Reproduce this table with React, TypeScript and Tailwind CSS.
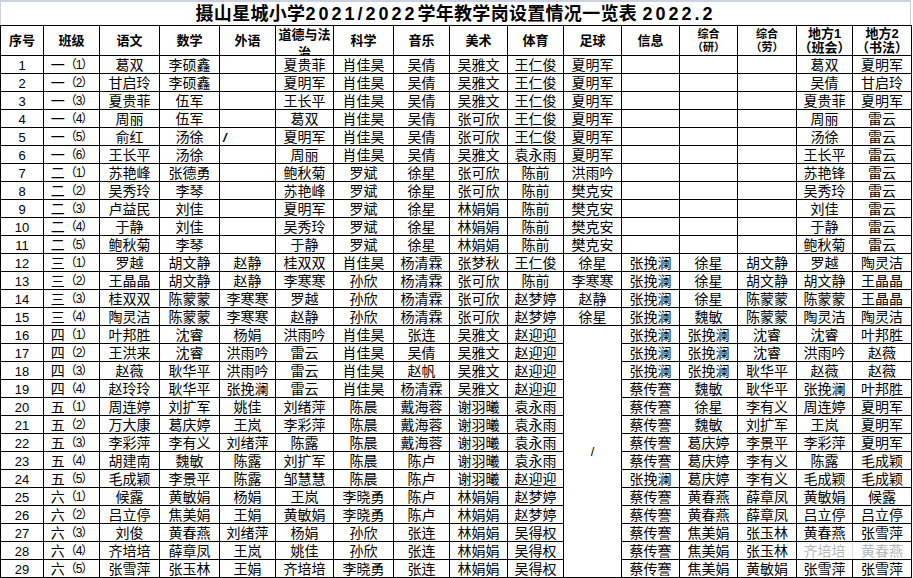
import React from 'react'

const widths = [43, 56, 60, 60, 56, 58, 60, 56, 58, 56, 58, 58, 58, 59, 56, 59]

const rows: string[][] = [
  ['1', '一（1）', '葛双', '李硕鑫', '', '夏贵菲', '肖佳昊', '吴倩', '吴雅文', '王仁俊', '夏明军', '', '', '', '葛双', '夏明军'],
  ['2', '一（2）', '甘启玲', '李硕鑫', '', '夏明军', '肖佳昊', '吴倩', '吴雅文', '王仁俊', '夏明军', '', '', '', '吴倩', '甘启玲'],
  ['3', '一（3）', '夏贵菲', '伍军', '', '王长平', '肖佳昊', '吴倩', '吴雅文', '王仁俊', '夏明军', '', '', '', '夏贵菲', '夏明军'],
  ['4', '一（4）', '周丽', '伍军', '', '葛双', '肖佳昊', '吴倩', '张可欣', '王仁俊', '夏明军', '', '', '', '周丽', '雷云'],
  ['5', '一（5）', '俞红', '汤徐', '/', '夏明军', '肖佳昊', '吴倩', '张可欣', '王仁俊', '夏明军', '', '', '', '汤徐', '雷云'],
  ['6', '一（6）', '王长平', '汤徐', '', '周丽', '肖佳昊', '吴倩', '吴雅文', '袁永雨', '夏明军', '', '', '', '王长平', '雷云'],
  ['7', '二（1）', '苏艳峰', '张德勇', '', '鲍秋菊', '罗斌', '徐星', '张可欣', '陈前', '洪雨吟', '', '', '', '苏艳锋', '雷云'],
  ['8', '二（2）', '吴秀玲', '李琴', '', '苏艳峰', '罗斌', '徐星', '张可欣', '陈前', '樊克安', '', '', '', '吴秀玲', '雷云'],
  ['9', '二（3）', '卢益民', '刘佳', '', '夏明军', '罗斌', '徐星', '林娟娟', '陈前', '樊克安', '', '', '', '刘佳', '雷云'],
  ['10', '二（4）', '于静', '刘佳', '', '吴秀玲', '罗斌', '徐星', '林娟娟', '陈前', '樊克安', '', '', '', '于静', '雷云'],
  ['11', '二（5）', '鲍秋菊', '李琴', '', '于静', '罗斌', '徐星', '林娟娟', '陈前', '樊克安', '', '', '', '鲍秋菊', '雷云'],
  ['12', '三（1）', '罗越', '胡文静', '赵静', '桂双双', '肖佳昊', '杨清霖', '张梦秋', '王仁俊', '徐星', '张挽澜', '徐星', '胡文静', '罗越', '陶灵洁'],
  ['13', '三（2）', '王晶晶', '胡文静', '赵静', '李寒寒', '孙欣', '杨清霖', '张可欣', '陈前', '李寒寒', '张挽澜', '徐星', '胡文静', '胡文静', '王晶晶'],
  ['14', '三（3）', '桂双双', '陈蒙蒙', '李寒寒', '罗越', '孙欣', '杨清霖', '张可欣', '赵梦婷', '赵静', '张挽澜', '徐星', '陈蒙蒙', '陈蒙蒙', '王晶晶'],
  ['15', '三（4）', '陶灵洁', '陈蒙蒙', '李寒寒', '赵静', '孙欣', '杨清霖', '张可欣', '赵梦婷', '徐星', '张挽澜', '魏敏', '陈蒙蒙', '陶灵洁', '陶灵洁'],
  ['16', '四（1）', '叶邦胜', '沈睿', '杨娟', '洪雨吟', '肖佳昊', '张连', '吴雅文', '赵迎迎', '/', '张挽澜', '张挽澜', '沈睿', '沈睿', '叶邦胜'],
  ['17', '四（2）', '王洪来', '沈睿', '洪雨吟', '雷云', '肖佳昊', '吴倩', '吴雅文', '赵迎迎', '', '张挽澜', '张挽澜', '沈睿', '洪雨吟', '赵薇'],
  ['18', '四（3）', '赵薇', '耿华平', '洪雨吟', '雷云', '肖佳昊', '赵帆', '吴雅文', '赵迎迎', '', '张挽澜', '张挽澜', '耿华平', '赵薇', '赵薇'],
  ['19', '四（4）', '赵玲玲', '耿华平', '张挽澜', '雷云', '肖佳昊', '杨清霖', '吴雅文', '赵迎迎', '', '蔡传謇', '魏敏', '耿华平', '张挽澜', '叶邦胜'],
  ['20', '五（1）', '周连婷', '刘扩军', '姚佳', '刘绪萍', '陈晨', '戴海蓉', '谢羽曦', '袁永雨', '', '蔡传謇', '徐星', '李有义', '周连婷', '夏明军'],
  ['21', '五（2）', '万大康', '葛庆婷', '王岚', '李彩萍', '陈晨', '戴海蓉', '谢羽曦', '袁永雨', '', '蔡传謇', '魏敏', '刘扩军', '王岚', '夏明军'],
  ['22', '五（3）', '李彩萍', '李有义', '刘绪萍', '陈露', '陈晨', '戴海蓉', '谢羽曦', '袁永雨', '', '蔡传謇', '葛庆婷', '李景平', '李彩萍', '夏明军'],
  ['23', '五（4）', '胡建南', '魏敏', '陈露', '刘扩军', '陈晨', '陈卢', '谢羽曦', '袁永雨', '', '蔡传謇', '葛庆婷', '李有义', '陈露', '毛成颖'],
  ['24', '五（5）', '毛成颖', '李景平', '陈露', '邹慧慧', '陈晨', '陈卢', '谢羽曦', '赵迎迎', '', '张挽澜', '葛庆婷', '李有义', '毛成颖', '毛成颖'],
  ['25', '六（1）', '候露', '黄敏娟', '杨娟', '王岚', '李晓勇', '陈卢', '林娟娟', '赵梦婷', '', '蔡传謇', '黄春燕', '薛章凤', '黄敏娟', '候露'],
  ['26', '六（2）', '吕立停', '焦美娟', '王娟', '黄敏娟', '李晓勇', '陈卢', '林娟娟', '赵梦婷', '', '蔡传謇', '黄春燕', '薛章凤', '吕立停', '吕立停'],
  ['27', '六（3）', '刘俊', '黄春燕', '刘绪萍', '杨娟', '孙欣', '张连', '林娟娟', '吴得权', '', '蔡传謇', '焦美娟', '张玉林', '黄春燕', '张雪萍'],
  ['28', '六（4）', '齐培培', '薛章凤', '王岚', '姚佳', '孙欣', '张连', '林娟娟', '吴得权', '', '蔡传謇', '焦美娟', '张玉林', '齐培培', '黄春燕'],
  ['29', '六（5）', '张雪萍', '张玉林', '王娟', '齐培培', '李晓勇', '张连', '林娟娟', '吴得权', '', '蔡传謇', '焦美娟', '黄敏娟', '张雪萍', '张雪萍'],
]

const simple = ['序号', '班级', '语文', '数学', '外语']
const simple2 = ['科学', '音乐', '美术', '体育', '足球', '信息']

function HeadCell({ children, small }: { children: React.ReactNode; small?: boolean }) {
  return (
    <th className="border border-black p-0 align-middle text-center font-bold">
      <div
        className={
          small
            ? 'h-[29px] flex flex-col items-center justify-center text-[11px] leading-[13px]'
            : 'h-[29px] flex flex-col items-center justify-center pt-[1px] text-[13px] leading-[14px]'
        }
      >
        {children}
      </div>
    </th>
  )
}

export default function App() {
  return (
    <div className="w-[913px] h-[578px] overflow-hidden bg-white font-['Liberation_Sans','Noto_Sans_CJK_SC',sans-serif] text-black">
      {/* Title */}
      <div className="h-[25px] border-t-2 border-x border-[#c9d1e3] flex items-end justify-center w-[911px]">
        <span className="text-[18px] font-bold leading-[22px] tracking-[0.3px]">
          摄山星城小学<span className="tracking-[3px]">2021/2022</span>学年教学岗设置情况一览表 <span className="tracking-[3px]">2022.2</span>
        </span>
      </div>

      {/* Table */}
      <table className="table-fixed border-collapse w-[911px]">
        <colgroup>
          {widths.map((w, i) => (
            <col key={i} style={{ width: w }} />
          ))}
        </colgroup>
        <thead>
          <tr>
            {simple.map(t => (
              <HeadCell key={t}>{t}</HeadCell>
            ))}
            <th className="border border-black p-0 align-top text-center text-[13px] font-bold">
              <div className="h-[29px] overflow-hidden leading-[18px]">道德与法治</div>
            </th>
            {simple2.map(t => (
              <HeadCell key={t}>{t}</HeadCell>
            ))}
            <HeadCell small>
              <span>综合</span>
              <span>（研）</span>
            </HeadCell>
            <HeadCell small>
              <span>综合</span>
              <span>（劳）</span>
            </HeadCell>
            <HeadCell>
              <span>地方1</span>
              <span>（班会）</span>
            </HeadCell>
            <HeadCell>
              <span>地方2</span>
              <span>（书法）</span>
            </HeadCell>
          </tr>
        </thead>
        <tbody>
          {rows.map((r, ri) => (
            <tr key={ri}>
              {r.map((c, ci) => {
                if (ci === 10 && ri > 15) return null
                if (ci === 10 && ri === 15) {
                  return (
                    <td key={ci} rowSpan={14} className="border border-black p-0 align-middle text-center text-[13px]">
                      /
                    </td>
                  )
                }
                const faded = ri === 27 && ci >= 14
                let border = 'border border-black p-0'
                if (faded) border += ci === 14 ? ' border-r-[#dcdcdc]' : ' border-l-[#dcdcdc]'
                let inner: React.ReactNode = c
                let box = 'h-[17px] flex items-end justify-center whitespace-nowrap text-[14px] leading-[15px]'
                if (ci === 0) {
                  box = 'h-[17px] flex items-end justify-center text-[13px] leading-[15px]'
                } else if (ci === 1) {
                  inner = (
                    <>
                      <span>{c.slice(0, 1)}</span>
                      <span className="text-[12px] tracking-[-1px]">{c.slice(1)}</span>
                    </>
                  )
                } else if (ci === 4 && c === '/') {
                  box = 'h-[17px] flex items-end justify-start pl-[3px] text-[13px] leading-[15px] font-bold italic'
                } else if (faded) {
                  box += ' text-[#b5b5b5]'
                }
                return (
                  <td key={ci} className={border}>
                    <div className={box}>{inner}</div>
                  </td>
                )
              })}
            </tr>
          ))}
        </tbody>
      </table>
    </div>
  )
}
